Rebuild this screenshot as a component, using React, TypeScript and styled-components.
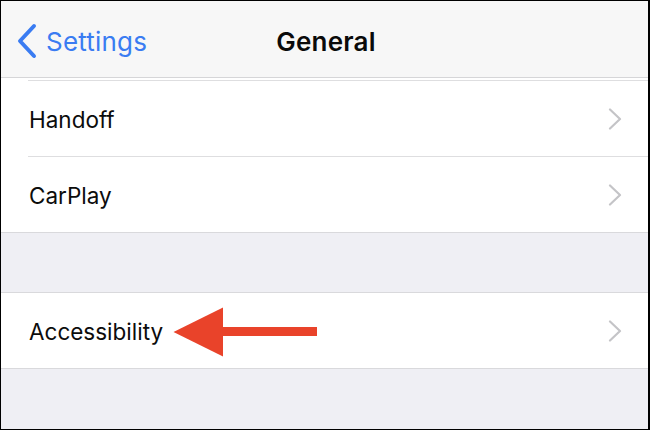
import React from "react";
import styled, { createGlobalStyle } from "styled-components";

const Global = createGlobalStyle`
  html, body { margin: 0; padding: 0; background: #efeff4; }
  * { box-sizing: border-box; }
`;

const Screen = styled.div`
  width: 650px;
  height: 430px;
  border: 1px solid #000;
  border-right-width: 2px;
  background: #efeff4;
  overflow: hidden;
  display: flex;
  flex-direction: column;
  font-family: Inter, "Liberation Sans", sans-serif;
`;

const NavBar = styled.div`
  height: 77px;
  flex: none;
  background: #f7f7f7;
  border-bottom: 1px solid #d6d6d8;
  display: grid;
  grid-template-columns: 1fr auto 1fr;
  align-items: center;
  padding: 4px 15px 0 15px;
`;

const BackButton = styled.div`
  display: flex;
  align-items: center;
  gap: 8px;
  color: #3a7cf2;
  font-size: 26px;
  letter-spacing: 0.2px;
`;

const Title = styled.div`
  color: #0a0a0a;
  font-size: 26px;
  font-weight: 600;
  letter-spacing: 0.2px;
  margin-left: 3px;
`;

const Group = styled.div<{ $top?: boolean }>`
  background: #fff;
  flex: none;
  border-bottom: 1px solid #d9d9dc;
  ${(p) => (p.$top ? "border-top: 1px solid #d9d9dc;" : "")}
`;

const Clip = styled.div`
  height: 2px;
`;

const Row = styled.div<{ $sep?: boolean }>`
  position: relative;
  height: ${(p) => (p.$sep ? 76 : 75)}px;
  display: flex;
  align-items: center;
  justify-content: space-between;
  padding: 0 26px 0 28px;
  font-size: 22.5px;
  color: #0c0c0c;
  ${(p) =>
    p.$sep
      ? `&::after {
    content: "";
    position: absolute;
    left: 27px;
    right: 0;
    bottom: 0;
    height: 1px;
    background: #dedee0;
  }`
      : ""}
`;

const Label = styled.span`
  padding-top: 1px;
`;

const Gap = styled.div`
  height: 59px;
  flex: none;
`;

const Arrow = styled.svg`
  position: absolute;
  left: 172px;
  top: 14px;
`;

const Chevron = () => (
  <svg width="14" height="22" viewBox="0 0 14 22">
    <polyline
      points="2,1.5 12,11 2,20.5"
      fill="none"
      stroke="#c4c4c7"
      strokeWidth="2.2"
      strokeLinecap="round"
      strokeLinejoin="round"
    />
  </svg>
);

export default function App() {
  return (
    <>
      <Global />
      <Screen>
        <NavBar>
          <BackButton>
            <svg width="22" height="36" viewBox="0 0 22 36">
              <polyline
                points="18,3 4,18 18,33"
                fill="none"
                stroke="#3a7cf2"
                strokeWidth="4"
                strokeLinecap="round"
                strokeLinejoin="round"
              />
            </svg>
            <span>Settings</span>
          </BackButton>
          <Title>General</Title>
          <div />
        </NavBar>
        <Group>
          <Clip />
          <Row $sep style={{ height: 1 }} />
          <Row $sep>
            <Label>Handoff</Label>
            <Chevron />
          </Row>
          <Row>
            <Label>CarPlay</Label>
            <Chevron />
          </Row>
        </Group>
        <Gap />
        <Group $top>
          <Row>
            <Label>Accessibility</Label>
            <Chevron />
            <Arrow width="145" height="50" viewBox="0 0 145 50">
              <polygon points="0.5,25 50,0.5 50,49.5" fill="#e9432a" />
              <rect x="49" y="20" width="95" height="9" fill="#e9432a" />
            </Arrow>
          </Row>
        </Group>
      </Screen>
    </>
  );
}
